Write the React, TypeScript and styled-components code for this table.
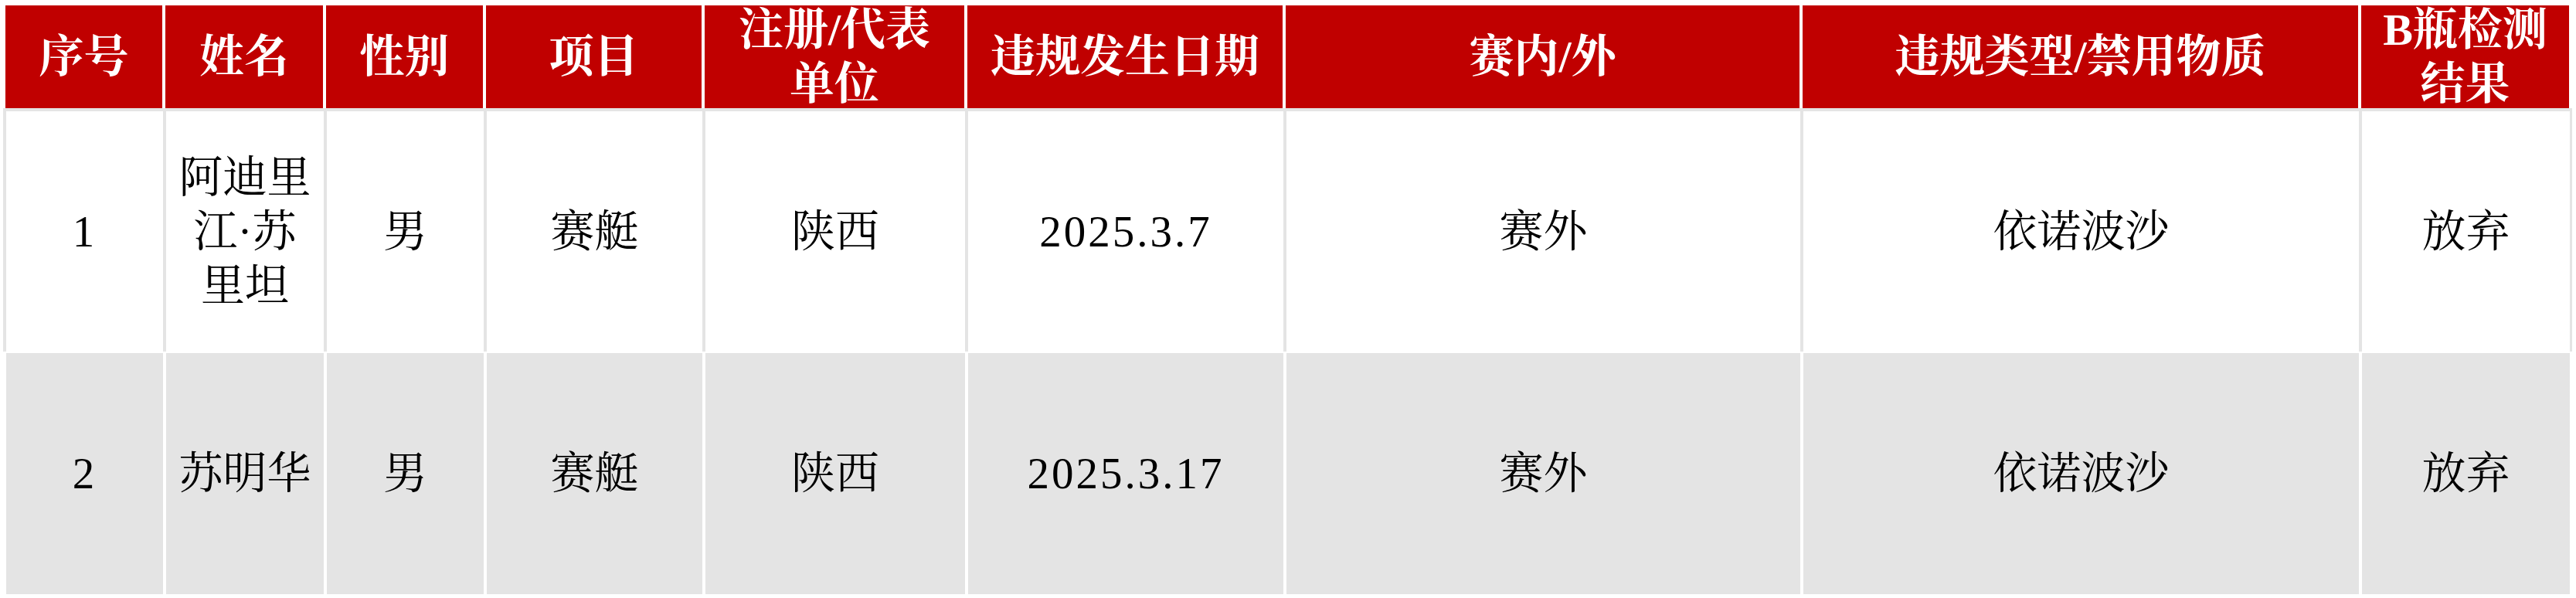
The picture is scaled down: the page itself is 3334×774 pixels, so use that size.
import React from "react";
import styled, { createGlobalStyle } from "styled-components";

const GlobalStyle = createGlobalStyle`
  html, body {
    margin: 0;
    padding: 0;
    background: #ffffff;
  }
  body {
    font-family: "Liberation Serif", "Noto Serif CJK SC", "Noto Sans CJK SC", serif;
  }
`;

const RED = "#c00000";
const GRAY = "#e4e4e4";
const COLUMNS = "203px 204px 203px 279px 336px 408px 665px 719px 269px";

const Table = styled.div`
  display: flex;
  flex-direction: column;
  width: 3325px;
  margin: 7px 0 0 4px;
`;

const HeaderRow = styled.div`
  display: grid;
  grid-template-columns: ${COLUMNS};
  column-gap: 4px;
  padding: 0 3px 0 3px;
  background: #ffffff;
`;

const BodyRow = styled.div<{ $striped: boolean }>`
  display: grid;
  grid-template-columns: ${COLUMNS};
  column-gap: 4px;
  padding: ${(p) => (p.$striped ? "2px 3px 0 4px" : "4px 3px 0 4px")};
  background: ${(p) => (p.$striped ? "#ffffff" : GRAY)};
`;

const HeaderCell = styled.div`
  display: flex;
  align-items: center;
  justify-content: center;
  height: 133px;
  padding: 0 18px;
  box-sizing: border-box;
  overflow: hidden;
  background: ${RED};
  color: #ffffff;
  font-weight: 700;
  font-size: 58px;
  line-height: 70px;
  text-align: center;
`;

const BodyCell = styled.div<{ $striped: boolean; $numeric?: boolean }>`
  display: flex;
  align-items: center;
  justify-content: center;
  height: ${(p) => (p.$striped ? "312px" : "311px")};
  padding: 0 12px;
  box-sizing: border-box;
  background: ${(p) => (p.$striped ? GRAY : "#ffffff")};
  color: #000000;
  font-size: 57px;
  line-height: 70px;
  text-align: center;
  letter-spacing: ${(p) => (p.$numeric ? "3px" : "0")};
`;

const headers = [
  "序号",
  "姓名",
  "性别",
  "项目",
  "注册/代表单位",
  "违规发生日期",
  "赛内/外",
  "违规类型/禁用物质",
  "B瓶检测结果",
];

type Record = {
  no: string;
  name: string;
  gender: string;
  sport: string;
  unit: string;
  date: string;
  scope: string;
  substance: string;
  result: string;
};

const rows: Record[] = [
  {
    no: "1",
    name: "阿迪里江·苏里坦",
    gender: "男",
    sport: "赛艇",
    unit: "陕西",
    date: "2025.3.7",
    scope: "赛外",
    substance: "依诺波沙",
    result: "放弃",
  },
  {
    no: "2",
    name: "苏明华",
    gender: "男",
    sport: "赛艇",
    unit: "陕西",
    date: "2025.3.17",
    scope: "赛外",
    substance: "依诺波沙",
    result: "放弃",
  },
];

export default function App() {
  return (
    <>
      <GlobalStyle />
      <Table>
        <HeaderRow>
          {headers.map((h) => (
            <HeaderCell key={h}>{h}</HeaderCell>
          ))}
        </HeaderRow>
        {rows.map((r, i) => {
          const striped = i % 2 === 1;
          return (
            <BodyRow key={r.no} $striped={striped}>
              <BodyCell $striped={striped} $numeric>{r.no}</BodyCell>
              <BodyCell $striped={striped}>{r.name}</BodyCell>
              <BodyCell $striped={striped}>{r.gender}</BodyCell>
              <BodyCell $striped={striped}>{r.sport}</BodyCell>
              <BodyCell $striped={striped}>{r.unit}</BodyCell>
              <BodyCell $striped={striped} $numeric>{r.date}</BodyCell>
              <BodyCell $striped={striped}>{r.scope}</BodyCell>
              <BodyCell $striped={striped}>{r.substance}</BodyCell>
              <BodyCell $striped={striped}>{r.result}</BodyCell>
            </BodyRow>
          );
        })}
      </Table>
    </>
  );
}
